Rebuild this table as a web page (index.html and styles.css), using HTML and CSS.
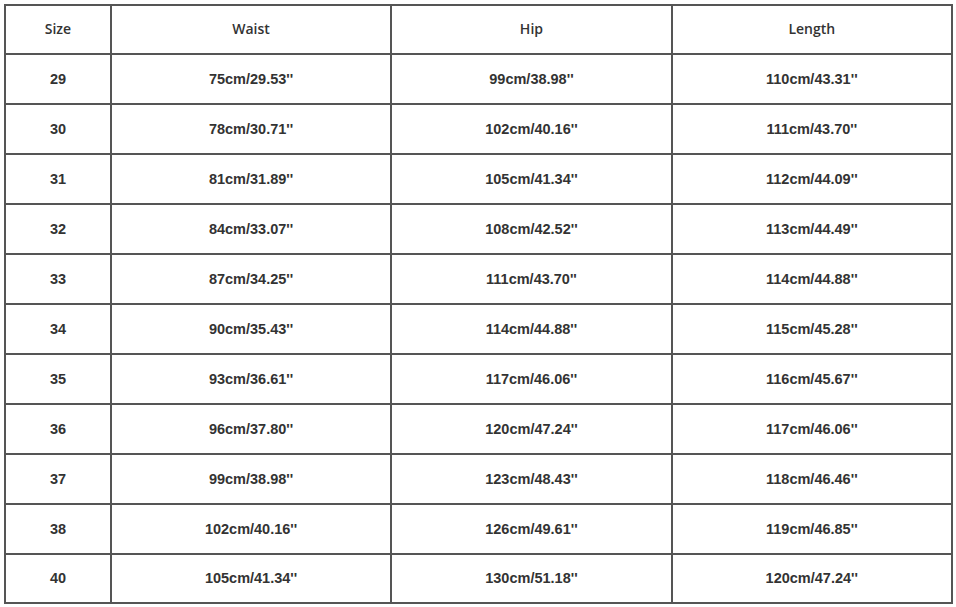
FILE: index.html
```html
<!DOCTYPE html>
<html>
<head>
<meta charset="utf-8">
<link rel="stylesheet" href="styles.css">
</head>
<body>
<table class="size-table">
<thead>
<tr><th class="c-size">Size</th><th class="c-col">Waist</th><th class="c-col">Hip</th><th class="c-col">Length</th></tr>
</thead>
<tbody>
<tr><td>29</td><td>75cm/29.53''</td><td>99cm/38.98''</td><td>110cm/43.31''</td></tr>
<tr><td>30</td><td>78cm/30.71''</td><td>102cm/40.16''</td><td>111cm/43.70''</td></tr>
<tr><td>31</td><td>81cm/31.89''</td><td>105cm/41.34''</td><td>112cm/44.09''</td></tr>
<tr><td>32</td><td>84cm/33.07''</td><td>108cm/42.52''</td><td>113cm/44.49''</td></tr>
<tr><td>33</td><td>87cm/34.25''</td><td>111cm/43.70''</td><td>114cm/44.88''</td></tr>
<tr><td>34</td><td>90cm/35.43''</td><td>114cm/44.88''</td><td>115cm/45.28''</td></tr>
<tr><td>35</td><td>93cm/36.61''</td><td>117cm/46.06''</td><td>116cm/45.67''</td></tr>
<tr><td>36</td><td>96cm/37.80''</td><td>120cm/47.24''</td><td>117cm/46.06''</td></tr>
<tr><td>37</td><td>99cm/38.98''</td><td>123cm/48.43''</td><td>118cm/46.46''</td></tr>
<tr><td>38</td><td>102cm/40.16''</td><td>126cm/49.61''</td><td>119cm/46.85''</td></tr>
<tr><td>40</td><td>105cm/41.34''</td><td>130cm/51.18''</td><td>120cm/47.24''</td></tr>
</tbody>
</table>
</body>
</html>
```
FILE: styles.css
```css
html, body {
  margin: 0;
  padding: 0;
  background: #ffffff;
}
body {
  padding: 4px 0 0 4px;
}
.size-table {
  border-collapse: collapse;
  table-layout: fixed;
  width: 949px;
  font-family: "Liberation Sans", Arial, sans-serif;
  font-size: 14.5px;
  line-height: 16px;
  font-weight: bold;
  color: #333333;
}
.size-table th,
.size-table td {
  border: 2px solid #555555;
  height: 50px;
  padding: 0 0 1px 0;
  box-sizing: border-box;
  text-align: center;
  vertical-align: middle;
}
.size-table th {
  height: 49px;
  font-family: "Open Sans", "Liberation Sans", sans-serif;
  font-size: 14px;
  font-weight: 600;
  color: #333333;
}
.size-table tbody tr:last-child td {
  height: 49px;
}
.c-size { width: 105px; }
.c-col { width: 278px; }
```
